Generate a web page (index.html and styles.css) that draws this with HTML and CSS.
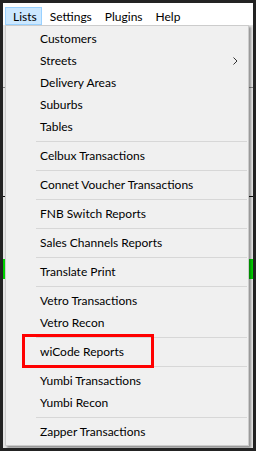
FILE: index.html
```html
<!DOCTYPE html>
<html lang="en">
<head>
    <meta charset="UTF-8">
    <title>Lists menu</title>
    <link rel="stylesheet" href="styles.css">
</head>
<body>
    <div class="window">
        <!-- Menu bar -->
        <div class="menubar">
            <span class="menubar-item active">Lists</span>
            <span class="menubar-item">Settings</span>
            <span class="menubar-item">Plugins</span>
            <span class="menubar-item">Help</span>
        </div>

        <!-- Application content behind the open menu -->
        <div class="content">
            <div class="row-mark mark-a"></div>
            <div class="row-mark mark-b"></div>
            <div class="green-bar"></div>
        </div>

        <!-- Dropdown for "Lists" -->
        <div class="dropdown">
            <div class="item">Customers</div>
            <div class="item">Streets <span class="arrow"><svg width="5" height="8" viewBox="0 0 5 8"><path d="M0.5 0.5 L4 4 L0.5 7.5" fill="none" stroke="#333" stroke-width="1"/></svg></span></div>
            <div class="item">Delivery Areas</div>
            <div class="item">Suburbs</div>
            <div class="item">Tables</div>
            <div class="sep"></div>
            <div class="item">Celbux Transactions</div>
            <div class="sep"></div>
            <div class="item">Connet Voucher Transactions</div>
            <div class="sep"></div>
            <div class="item">FNB Switch Reports</div>
            <div class="sep"></div>
            <div class="item">Sales Channels Reports</div>
            <div class="sep"></div>
            <div class="item">Translate Print</div>
            <div class="sep"></div>
            <div class="item">Vetro Transactions</div>
            <div class="item">Vetro Recon</div>
            <div class="sep"></div>
            <div class="item highlight">wiCode Reports</div>
            <div class="sep"></div>
            <div class="item">Yumbi Transactions</div>
            <div class="item">Yumbi Recon</div>
            <div class="sep"></div>
            <div class="item">Zapper Transactions</div>
        </div>
    </div>
</body>
</html>
```

FILE: styles.css
```css
/* Global styles */
body {
    margin: 0;
    padding: 3px;
    background-color: #232323;
    font-family: "Segoe UI", Lato, "Noto Sans", sans-serif;
    font-size: 12px;
    color: #000;
}

.window {
    position: relative;
    width: 250px;
    height: 445px;
    background-color: #f0f0f0;
    display: flex;
    flex-direction: column;
    overflow: hidden;
}

/* Menu bar */
.menubar {
    height: 22px;
    background-color: #fff;
    display: flex;
    align-items: center;
    padding-left: 2px;
}

.menubar-item {
    height: 18px;
    line-height: 17px;
    padding: 0 4px 0 7px;
    margin-top: 3px;
    border: 1px solid transparent;
    box-sizing: border-box;
}

.menubar-item.active {
    background-color: #cce8ff;
    border-color: #99d1ff;
}

/* Content behind */
.content {
    position: relative;
    flex: 1;
    background-color: #e4e4e4;
}

.green-bar {
    position: absolute;
    left: 0;
    right: 0;
    top: 234px;
    height: 20px;
    background-color: #00d000;
}

.row-mark {
    position: absolute;
    left: 0;
    right: 0;
    height: 1px;
    background-color: #111;
}

.mark-a {
    top: 171px;
}

.mark-b {
    top: 62px;
    background-color: #888;
}

/* Dropdown */
.dropdown {
    position: absolute;
    left: 2px;
    top: 22px;
    width: 242px;
    padding: 2px 0;
    background-color: #f0f0f0;
    border: 1px solid #cccccc;
    box-shadow: 2px 2px 2px rgba(0, 0, 0, 0.35);
}

.item {
    position: relative;
    height: 22px;
    line-height: 22px;
    padding-left: 34px;
    white-space: nowrap;
}

.item .arrow {
    position: absolute;
    right: 10px;
    top: 7px;
    line-height: 0;
}

.item.highlight::before {
    content: "";
    position: absolute;
    left: 16px;
    top: -7px;
    width: 132px;
    height: 34px;
    border: 3px solid #ff0000;
    box-sizing: border-box;
}

.sep {
    height: 7px;
    display: flex;
    align-items: center;
    padding-left: 30px;
    padding-right: 1px;
}

.sep::after {
    content: "";
    flex: 1;
    height: 1px;
    background-color: #d7d7d7;
}
```
